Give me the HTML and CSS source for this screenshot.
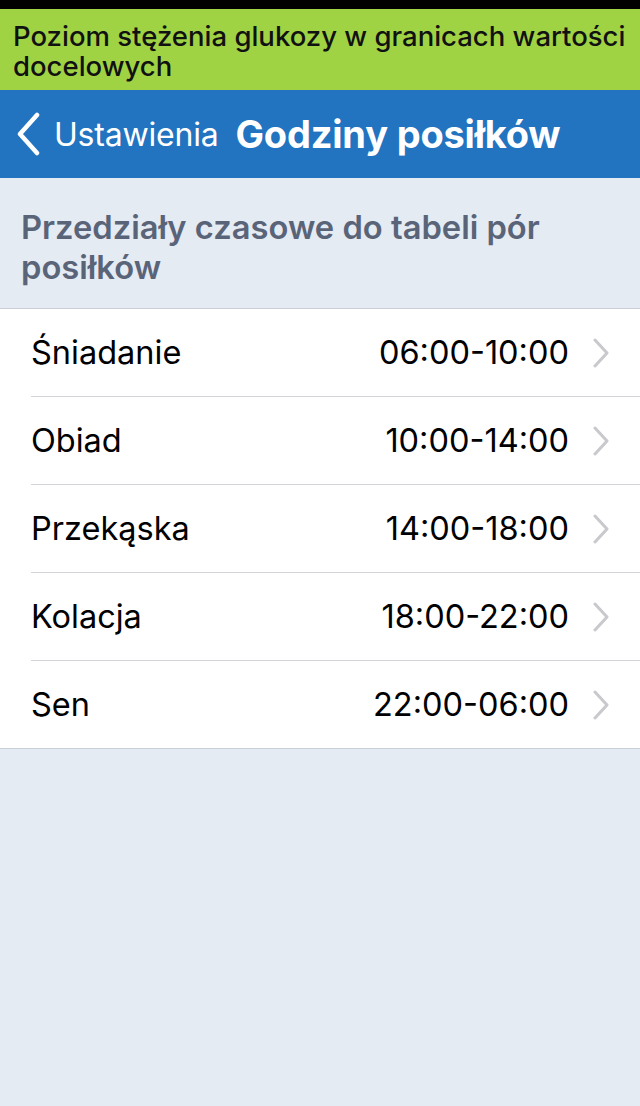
FILE: index.html
```html
<!DOCTYPE html>
<html lang="pl">
<head>
<meta charset="utf-8">
<title>Godziny posiłków</title>
<link rel="stylesheet" href="styles.css">
</head>
<body>
<div class="screen">
  <div class="status"></div>
  <div class="banner">Poziom stężenia glukozy w granicach wartości docelowych</div>
  <div class="nav">
    <a class="back">
      <svg class="back-icon" width="26" height="44" viewBox="0 0 26 44"><path d="M22 3 L5 22 L22 41" fill="none" stroke="#fff" stroke-width="4.5" stroke-linecap="round" stroke-linejoin="round"/></svg>
      <span class="back-label">Ustawienia</span>
    </a>
    <h1 class="title">Godziny posiłków</h1>
  </div>
  <div class="section-header">Przedziały czasowe do tabeli pór posiłków</div>
  <ul class="list">
    <li class="row"><span class="label">Śniadanie</span><span class="value">06:00-10:00</span><svg class="chev" width="16" height="30" viewBox="0 0 16 30"><path d="M2 2 L14 15 L2 28" fill="none" stroke="#c8c8cd" stroke-width="3" stroke-linecap="round" stroke-linejoin="round"/></svg></li>
    <li class="row"><span class="label">Obiad</span><span class="value">10:00-14:00</span><svg class="chev" width="16" height="30" viewBox="0 0 16 30"><path d="M2 2 L14 15 L2 28" fill="none" stroke="#c8c8cd" stroke-width="3" stroke-linecap="round" stroke-linejoin="round"/></svg></li>
    <li class="row"><span class="label">Przekąska</span><span class="value">14:00-18:00</span><svg class="chev" width="16" height="30" viewBox="0 0 16 30"><path d="M2 2 L14 15 L2 28" fill="none" stroke="#c8c8cd" stroke-width="3" stroke-linecap="round" stroke-linejoin="round"/></svg></li>
    <li class="row"><span class="label">Kolacja</span><span class="value">18:00-22:00</span><svg class="chev" width="16" height="30" viewBox="0 0 16 30"><path d="M2 2 L14 15 L2 28" fill="none" stroke="#c8c8cd" stroke-width="3" stroke-linecap="round" stroke-linejoin="round"/></svg></li>
    <li class="row"><span class="label">Sen</span><span class="value">22:00-06:00</span><svg class="chev" width="16" height="30" viewBox="0 0 16 30"><path d="M2 2 L14 15 L2 28" fill="none" stroke="#c8c8cd" stroke-width="3" stroke-linecap="round" stroke-linejoin="round"/></svg></li>
  </ul>
</div>
</body>
</html>
```

FILE: styles.css
```css
* { box-sizing: border-box; }
html, body {
  margin: 0;
  padding: 0;
  background: #e5ebf3;
  font-family: Inter, "Liberation Sans", Arial, sans-serif;
}
.screen {
  width: 640px;
  min-height: 1106px;
  background: #e5ebf3;
}
.status {
  height: 9px;
  background: #000;
}
.banner {
  background: #a0d344;
  color: #111;
  font-size: 27.5px;
  font-weight: 500;
  line-height: 30px;
  padding: 12px 0 9px 13px;
  height: 81px;
}
.nav {
  height: 88px;
  background: #2273c0;
  display: flex;
  align-items: center;
  padding-left: 15px;
  color: #fff;
}
.back {
  display: flex;
  align-items: center;
  gap: 13px;
}
.back-icon { display: block; }
.back-label {
  font-size: 32px;
  font-weight: 400;
  letter-spacing: -0.2px;
}
.title {
  margin: 0 0 0 17px;
  font-size: 38px;
  font-weight: 700;
  letter-spacing: -0.2px;
}
.section-header {
  height: 131px;
  padding: 29px 20px 0 21px;
  font-size: 32.7px;
  line-height: 40px;
  font-weight: 600;
  color: #5a6479;
  border-bottom: 1px solid #c9ced8;
}
.list {
  list-style: none;
  margin: 0;
  padding: 0 0 0 31px;
  background: #fff;
  border-bottom: 1px solid #c9ced8;
}
.row {
  height: 88px;
  display: flex;
  align-items: center;
  border-bottom: 1px solid #d4d4d8;
  padding-right: 31px;
  font-size: 32.5px;
  color: #000;
}
.row:last-child { border-bottom: none; height: 87px; }
.label { flex: 1; }
.value { margin-right: 24px; }
.chev { display: block; }
```
